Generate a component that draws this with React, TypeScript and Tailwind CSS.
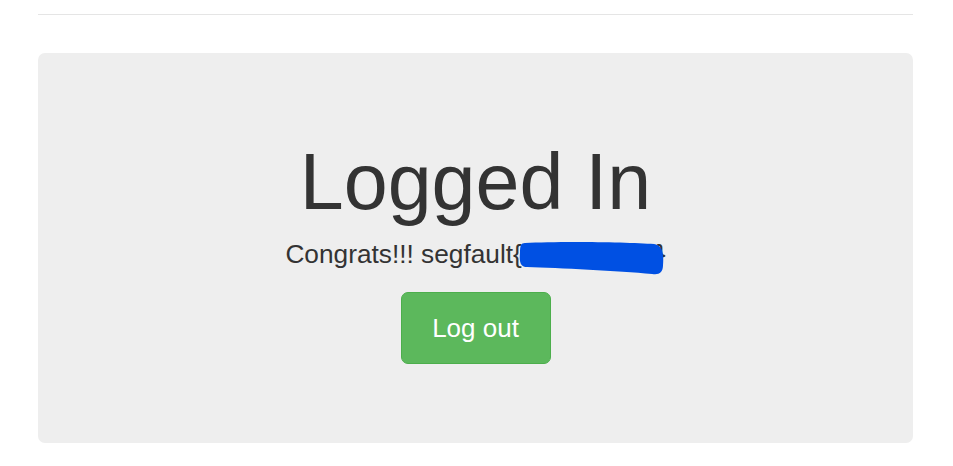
import React from "react";

// Redaction scribble drawn over the flag text
function Scribble() {
  return (
    <svg
      className="absolute left-[-3px] top-[5px]"
      width="146"
      height="34"
      viewBox="0 0 147 34"
    >
      <path
        d="M6 2 C40 0 110 1 136 3 C144 4 146 12 145 24 C145 32 141 34 134 33 C100 30 40 27 8 26 C2 26 0 22 1 12 C1 5 2 2 6 2 Z"
        fill="#0050e3"
      />
    </svg>
  );
}

export default function App() {
  return (
    <div className="min-h-[466px] bg-white pl-[38px] pr-[40px] pt-[14px] font-['Liberation_Sans',Arial,sans-serif] text-[#333]">
      <hr className="border-0 border-t border-[#e5e5e5]" />

      {/* Jumbotron */}
      <div className="mt-[38px] h-[390px] rounded-[7px] bg-[#eeeeee] pt-[85px] text-center">
        <h1 className="text-[79px] leading-[87px] font-normal">Logged In</h1>
        <p className="mt-[11px] text-[26.25px] leading-[37.5px]">
          Congrats!!! segfault{"{"}
          <span className="relative inline-block w-[135px]">
            &nbsp;
            <Scribble />
          </span>
          {"}"}
        </p>
        <div className="mt-[18.5px] flex justify-center">
          <button className="h-[72px] w-[150px] rounded-[7px] border border-[#4cae4c] bg-[#5cb85c] text-[26px] leading-none text-white">
            Log out
          </button>
        </div>
      </div>
    </div>
  );
}
